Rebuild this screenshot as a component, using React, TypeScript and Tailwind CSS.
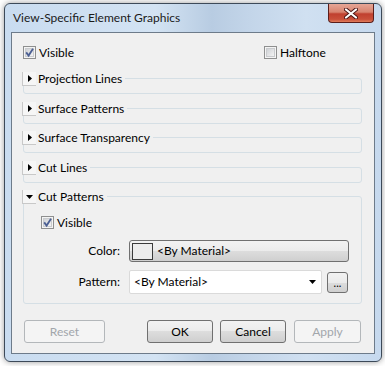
import React from 'react';

const font = "font-['Lato','Liberation_Sans',sans-serif]";

function CheckBox({ checked }: { checked?: boolean }) {
  return (
    <span className="relative flex h-[13px] w-[13px] shrink-0 items-center justify-center border border-[#8e8f8f] bg-[#f4f4f4]">
      <span className="h-[9px] w-[9px] border border-[#c9cbce] bg-[linear-gradient(135deg,#cfd2d6,#f3f3f3)]" />
      {checked && (
        <svg className="absolute left-[-1px] top-[-1px]" width="13" height="13" viewBox="0 0 13 13">
          <path d="M3.2 6.4 L5.6 9.6 L10 2.8" fill="none" stroke="#4b5f93" strokeWidth="1.8" />
        </svg>
      )}
    </span>
  );
}

function Arrow({ open }: { open?: boolean }) {
  return (
    <span className="flex h-[14px] w-[14px] shrink-0 items-center justify-center border-b border-l border-[#c8c8c8] bg-[#f6f6f6]">
      {open ? (
        <svg width="7" height="4" viewBox="0 0 7 4">
          <path d="M0 0 H7 L3.5 4 Z" fill="#000" />
        </svg>
      ) : (
        <svg width="4" height="7" viewBox="0 0 4 7">
          <path d="M0 0 V7 L4 3.5 Z" fill="#000" />
        </svg>
      )}
    </span>
  );
}

function Section({ title, open, children, className }: { title: string; open?: boolean; children?: React.ReactNode; className?: string }) {
  return (
    <div className={`relative ml-[11px] w-[339px] rounded-[3px] border border-[#d5dfe5] ${className ?? ''}`}>
      <div className="absolute left-[-2px] top-[-7px] flex h-[14px] items-center bg-[#f0f0f0] pr-[3px]">
        <Arrow open={open} />
        <span className="ml-[2px] text-[12px] leading-[14px] text-black">{title}</span>
      </div>
      {children}
    </div>
  );
}

function Button({ label, width, disabled }: { label: string; width: string; disabled?: boolean }) {
  return (
    <div
      className={`flex h-[23px] ${width} items-center justify-center rounded-[3px] border text-[12px] ${
        disabled
          ? 'border-[#b3b7ba] bg-[#f4f4f4] text-[#a2a6ab]'
          : 'border-[#707070] bg-[linear-gradient(#f2f2f2_0%,#ebebeb_50%,#dddddd_50%,#cfcfcf_100%)] text-black'
      }`}
    >
      {label}
    </div>
  );
}

export default function App() {
  return (
    <div className={`h-[366px] w-[385px] overflow-hidden bg-white pt-[3px] ${font}`}>
      <div className="ml-[4px] flex h-[359px] w-[378px] flex-col rounded-[6px] border border-[#3d4a59] bg-[linear-gradient(90deg,#c9dcf0,#d3e3f3_40%,#b8cce2_55%,#c3d5e9_65%,#d0e0f1_80%,#c6d9ee)] px-[6px] pb-[7px] shadow-[0_0_6px_rgba(0,0,0,0.4)]">
        <div className="flex h-[28px] items-start justify-between">
          <span className="pl-[2px] pt-[6px] text-[12px] leading-[16px] text-[#1a1a1a]">View-Specific Element Graphics</span>
          <div className="mr-[1px] flex h-[19px] w-[46px] items-center justify-center rounded-b-[4px] border border-t-0 border-[#5a1d1a] bg-[linear-gradient(#e6a696_0%,#d88470_45%,#c0402f_55%,#c9503a_85%,#e07d5c_100%)]">
            <svg width="14" height="11" viewBox="0 0 14 11">
              <path d="M2 1.5 L12 9.5 M12 1.5 L2 9.5" stroke="#4a1414" strokeWidth="4" strokeLinecap="round" />
              <path d="M2 1.5 L12 9.5 M12 1.5 L2 9.5" stroke="#fff" strokeWidth="2.2" strokeLinecap="round" />
            </svg>
          </div>
        </div>

        <div className="flex h-[322px] flex-col border border-[#6d7b8a] bg-[#f0f0f0] text-[12px] text-black">
          <div className="mt-[13px] flex h-[13px] items-center pl-[11px]">
            <div className="flex w-[241px] items-center gap-[3px]">
              <CheckBox checked />
              <span>Visible</span>
            </div>
            <div className="flex items-center gap-[3px]">
              <CheckBox />
              <span>Halftone</span>
            </div>
          </div>

          <Section title="Projection Lines" className="mt-[19px] h-[16px]" />
          <Section title="Surface Patterns" className="mt-[14px] h-[16px]" />
          <Section title="Surface Transparency" className="mt-[13px] h-[16px]" />
          <Section title="Cut Lines" className="mt-[14px] h-[16px]" />
          <Section title="Cut Patterns" open className="mt-[13px] h-[108px]">
            <div className="mt-[19px] flex h-[13px] items-center gap-[3px] pl-[17px]">
              <CheckBox checked />
              <span>Visible</span>
            </div>
            <div className="mt-[11px] flex items-center">
              <span className="w-[96px] text-right">Color:</span>
              <div className="ml-[9px] flex h-[22px] w-[220px] items-center rounded-[3px] border border-[#707070] bg-[linear-gradient(#f2f2f2_0%,#ebebeb_50%,#dddddd_50%,#cfcfcf_100%)]">
                <span className="ml-[2px] h-[17px] w-[21px] border border-[#3a3a3a] bg-[#ececec]" />
                <span className="ml-[4px]">&lt;By Material&gt;</span>
              </div>
            </div>
            <div className="mt-[8px] flex items-center">
              <span className="w-[96px] text-right">Pattern:</span>
              <div className="ml-[9px] flex h-[24px] w-[193px] items-center justify-between rounded-[2px] border border-[#dadada] bg-white pl-[4px] pr-[5px]">
                <span>&lt;By Material&gt;</span>
                <svg width="7" height="4" viewBox="0 0 7 4">
                  <path d="M0 0 H7 L3.5 4 Z" fill="#000" />
                </svg>
              </div>
              <div className="ml-[5px] flex h-[21px] w-[21px] items-end justify-center rounded-[3px] border border-[#707070] bg-[linear-gradient(#f2f2f2_0%,#ebebeb_50%,#dddddd_50%,#cfcfcf_100%)] pb-[4px] text-[11px] leading-[10px]">
                ...
              </div>
            </div>
          </Section>

          <div className="mt-[16px] flex items-center pl-[12px]">
            <Button label="Reset" width="w-[81px]" disabled />
            <div className="ml-[42px]">
              <Button label="OK" width="w-[66px]" />
            </div>
            <div className="ml-[7px]">
              <Button label="Cancel" width="w-[66px]" />
            </div>
            <div className="ml-[8px]">
              <Button label="Apply" width="w-[67px]" disabled />
            </div>
          </div>
        </div>
      </div>
    </div>
  );
}
